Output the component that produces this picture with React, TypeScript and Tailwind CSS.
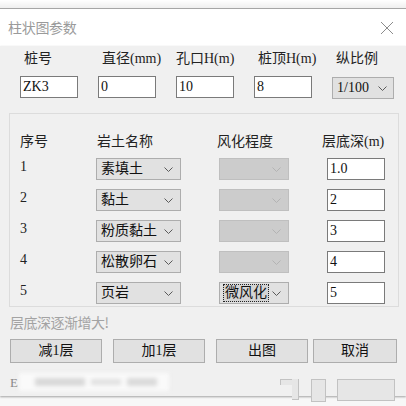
import React from "react";

const font = "font-['Liberation_Serif','Noto_Sans_CJK_SC',serif]";

function Chevron({ disabled }: { disabled?: boolean }) {
  return (
    <svg width="9" height="5" viewBox="0 0 9 5" className="shrink-0">
      <polyline
        points="0.5,0.5 4.5,4.5 8.5,0.5"
        fill="none"
        stroke={disabled ? "#b3b3b3" : "#5a5a5a"}
        strokeWidth="1"
      />
    </svg>
  );
}

function Combo({
  value,
  width,
  disabled,
  focused,
}: {
  value?: string;
  width: string;
  disabled?: boolean;
  focused?: boolean;
}) {
  return (
    <div
      className={`${width} h-[22px] flex items-center justify-between pl-[3px] pr-[7px] border ${
        disabled
          ? "bg-[#cccccc] border-[#bfbfbf]"
          : "bg-[#e1e1e1] border-[#adadad]"
      }`}
    >
      {focused ? (
        <span className="h-[18px] px-[1px] flex items-center border border-dotted border-[#222] bg-[#d4d4d4] text-[14px] leading-none text-[#111]">
          {value}
        </span>
      ) : (
        <span className="pl-[1px] text-[14px] leading-none text-[#111]">
          {value}
        </span>
      )}
      <Chevron disabled={disabled} />
    </div>
  );
}

function Field({ value, width }: { value: string; width: string }) {
  return (
    <div
      className={`${width} h-[22px] flex items-center px-[2px] bg-white border border-[#7a7a7a] text-[14px] leading-none text-[#111]`}
    >
      {value}
    </div>
  );
}

const rows = [
  { n: "1", soil: "素填土", depth: "1.0" },
  { n: "2", soil: "黏土", depth: "2" },
  { n: "3", soil: "粉质黏土", depth: "3" },
  { n: "4", soil: "松散卵石", depth: "4" },
  { n: "5", soil: "页岩", depth: "5", weather: "微风化" },
];

export default function App() {
  return (
    <div className={`w-[406px] h-[406px] bg-[#f7f7f7] overflow-hidden relative ${font}`}>
      {/* top edge */}
      <div className="h-[9px] bg-gradient-to-b from-white to-[#efefef] border-b border-[#a6a6a6]" />

      {/* title bar */}
      <div className="h-[37px] bg-white flex items-center justify-between pl-[8px] pr-[12px]">
        <span className="text-[14px] text-[#9a9a9a] font-['Noto_Sans_CJK_SC',sans-serif] tracking-[-0.3px]">
          柱状图参数
        </span>
        <svg width="14" height="14" viewBox="0 0 14 14">
          <path d="M1 1 L13 13 M13 1 L1 13" stroke="#8c8c8c" strokeWidth="1" />
        </svg>
      </div>

      {/* body */}
      <div className="h-[350px] bg-[#f0f0f0] flex flex-col shadow-[0_1px_2px_rgba(0,0,0,0.35)]">
        {/* top labels */}
        <div className="flex pl-[20px] gap-[20px] pt-[5px] text-[14px] text-[#222] leading-[16px]">
          <span className="w-[58px] pl-[4px]">桩号</span>
          <span className="w-[58px] pl-[4px] whitespace-nowrap">直径(mm)</span>
          <span className="w-[58px] whitespace-nowrap">孔口H(m)</span>
          <span className="w-[58px] pl-[4px] whitespace-nowrap">桩顶H(m)</span>
          <span className="w-[62px] pl-[4px]">纵比例</span>
        </div>

        {/* top inputs */}
        <div className="flex items-start pl-[20px] gap-[20px] mt-[9px]">
          <Field value="ZK3" width="w-[58px]" />
          <Field value="0" width="w-[58px]" />
          <Field value="10" width="w-[58px]" />
          <Field value="8" width="w-[58px]" />
          <div className="w-[62px] h-[22px] mt-[1px] flex items-center justify-between pl-[4px] pr-[6px] bg-[#e1e1e1] border border-[#adadad] text-[14px] leading-none text-[#111]">
            1/100
            <Chevron />
          </div>
        </div>

        {/* group box */}
        <div className="mx-[9px] w-[390px] mt-[14px] h-[194px] border border-[#dcdcdc] flex flex-col">
          <div className="flex pl-[10px] pt-[20px] text-[14px] leading-[16px] text-[#222]">
            <span className="w-[77px]">序号</span>
            <span className="w-[120px]">岩土名称</span>
            <span className="w-[105px]">风化程度</span>
            <span className="whitespace-nowrap">层底深(m)</span>
          </div>
          <div className="flex flex-col gap-[9px] mt-[8px]">
            {rows.map((r) => (
              <div key={r.n} className="flex items-center h-[22px] pl-[10px]">
                <span className="w-[76px] text-[14px] leading-none text-[#222] -mt-[4px]">
                  {r.n}
                </span>
                <Combo value={r.soil} width="w-[85px]" />
                <div className="w-[38px]" />
                {r.weather ? (
                  <Combo value={r.weather} width="w-[70px]" focused />
                ) : (
                  <Combo width="w-[70px]" disabled />
                )}
                <div className="w-[38px]" />
                <Field value={r.depth} width="w-[58px]" />
              </div>
            ))}
          </div>
        </div>

        {/* hint */}
        <div className="pl-[10px] mt-[7px] text-[14px] leading-[16px] text-[#a3a3a3] font-['Noto_Sans_CJK_SC',sans-serif] tracking-[-0.5px]">
          层底深逐渐增大!
        </div>

        {/* buttons */}
        <div className="flex pl-[10px] mt-[9px] gap-[11px]">
          {["减1层", "加1层", "出图"].map((t) => (
            <div
              key={t}
              className="w-[92px] h-[24px] flex items-center justify-center bg-[#e1e1e1] border border-[#adadad] text-[14px] leading-none text-[#111]"
            >
              {t}
            </div>
          ))}
          <div className="w-[84px] -ml-[6px] h-[24px] flex items-center justify-center bg-[#e1e1e1] border border-[#adadad] text-[14px] leading-none text-[#111]">
            取消
          </div>
        </div>

        {/* blurred status line */}
        <div className="flex items-center pl-[10px] mt-[9px] h-[20px] gap-[1px]">
          <span className="text-[13px] text-[#888] leading-none">E</span>
          <div className="w-[150px] h-[18px] bg-[#fafafa] blur-[2px] flex items-center gap-[6px] pl-[16px]">
            <div className="w-[50px] h-[8px] bg-[#d8d8d8]" />
            <div className="w-[30px] h-[6px] bg-[#e0e0e0]" />
            <div className="w-[30px] h-[8px] bg-[#dadada]" />
          </div>
        </div>
      </div>

      {/* shapes overlapping lower edge */}
      <div className="absolute left-[280px] top-[379px] w-[19px] h-[21px]">
        <div className="absolute left-0 top-0 w-[19px] h-[6px] bg-[#e6e6e6] border-t border-l border-r border-[#c2c2c2]" />
        <div className="absolute left-[12px] top-0 w-[7px] h-[21px] bg-[#e6e6e6] border-r border-b border-[#c2c2c2]" />
      </div>
      <div className="absolute left-[311px] top-[379px] w-[15px] h-[23px] bg-[#e6e6e6] border border-[#c2c2c2]" />
      <div className="absolute left-[337px] top-[379px] w-[58px] h-[22px] bg-[#e6e6e6] border border-[#c2c2c2]" />
    </div>
  );
}
